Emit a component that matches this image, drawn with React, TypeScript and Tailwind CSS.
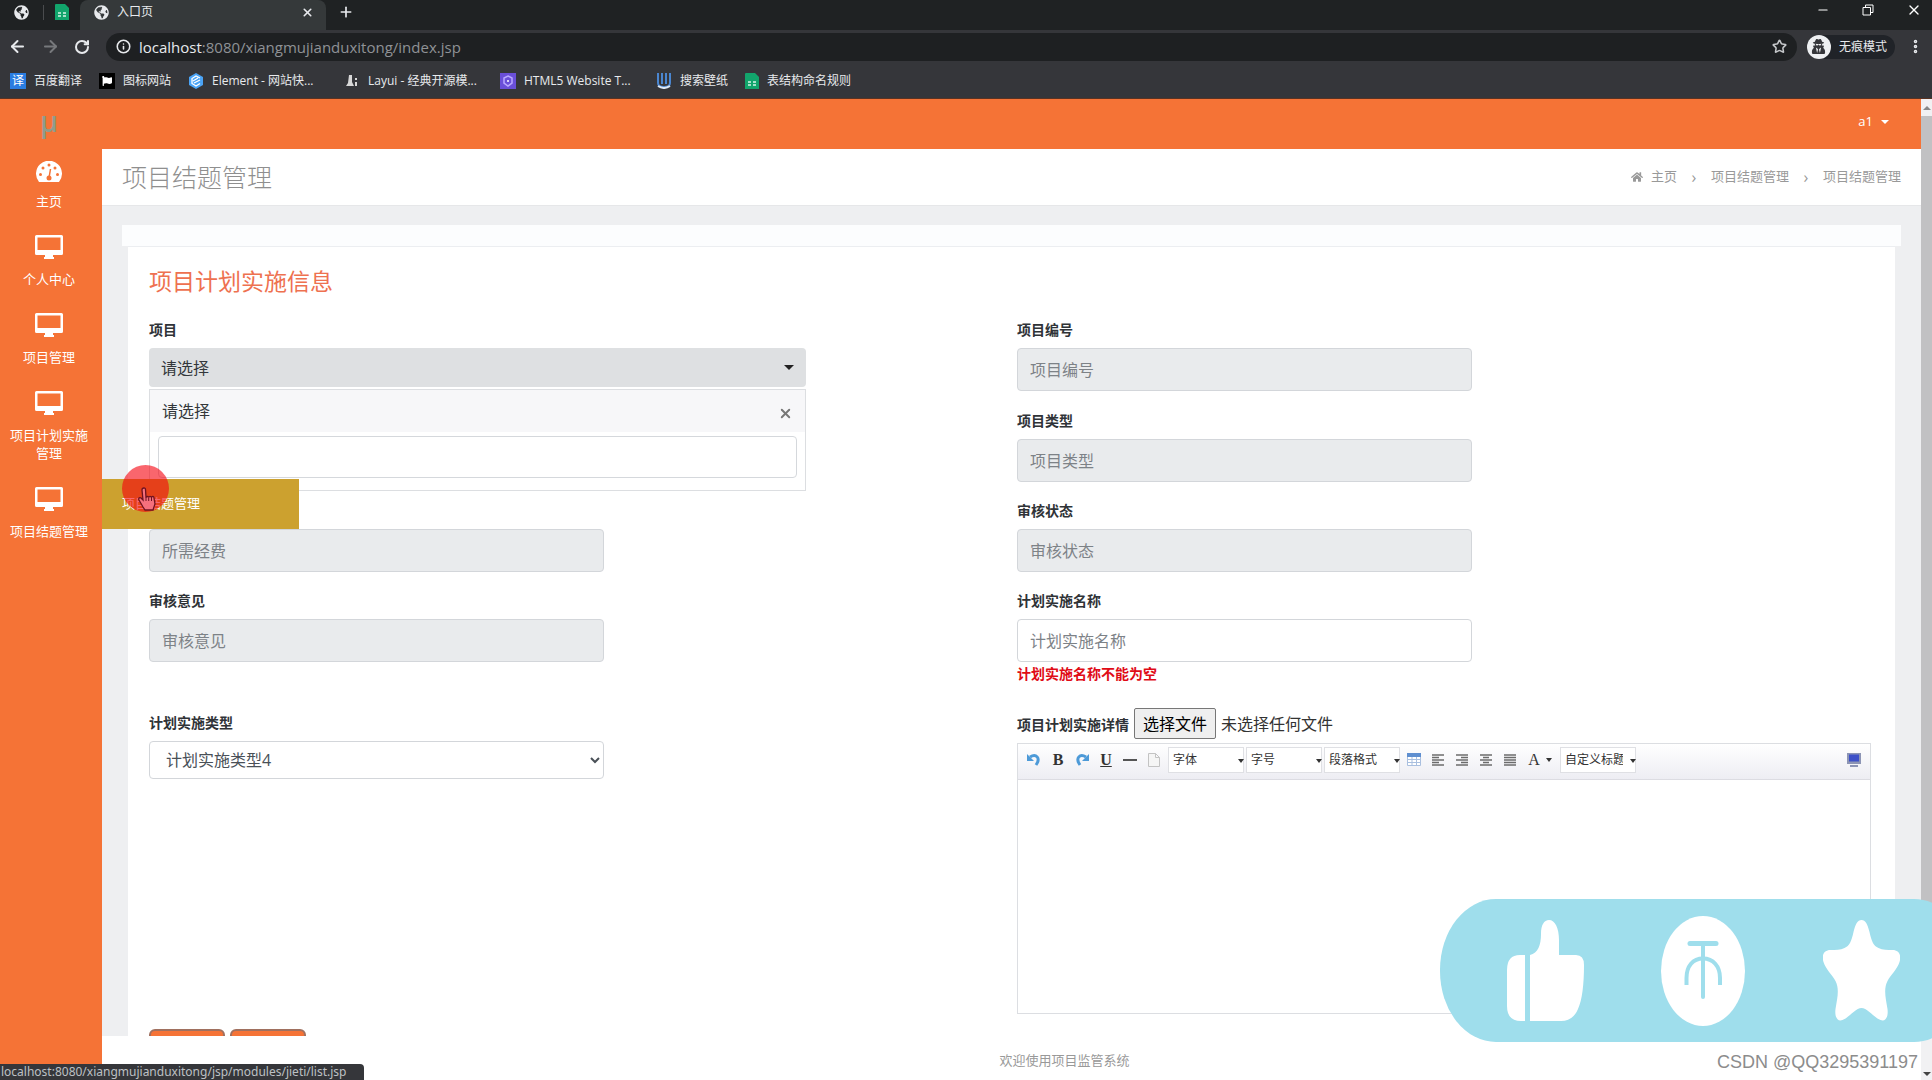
import type { ReactNode } from "react";
import { ArrowLeft, ArrowRight, Info, Minus, MoreVertical, Plus, RotateCw, Star, X } from "lucide-react";
import { FaFlag, FaGlobeAmericas, FaHome, FaUserSecret } from "react-icons/fa";

const SheetIcon = () => (
  <svg viewBox="0 0 14 16" className="h-4 w-3.5 shrink-0">
    <path d="M1 0h9l4 4v12H0V1a1 1 0 0 1 1-1z" fill="#12a56c" />
    <path d="M3 9h3M8 9h3M3 12h3M8 12h3" stroke="#d7f5e8" strokeWidth="1.5" />
  </svg>
);

const bookmarks: { text: string; icon: ReactNode; width: string }[] = [
  {
    text: "百度翻译",
    width: "w-[89px]",
    icon: (
      <span className="flex size-4 items-center justify-center bg-[#2a7de1] text-xs leading-4 text-white">译</span>
    ),
  },
  {
    text: "图标网站",
    width: "w-[89px]",
    icon: (
      <span className="flex size-4 items-center justify-center bg-black text-white">
        <FaFlag size={10} />
      </span>
    ),
  },
  {
    text: "Element - 网站快...",
    width: "w-[156px]",
    icon: (
      <svg viewBox="0 0 16 16" className="size-4 shrink-0">
        <path d="M8 0l7 4v8l-7 4-7-4V4z" fill="#4aa3f5" />
        <path d="M12 5L8 3 4 5.500v5L8 13l4-2.500M5 8l5-3M6 10l6-3" stroke="#fff" strokeWidth="1.300" fill="none" />
      </svg>
    ),
  },
  {
    text: "Layui - 经典开源模...",
    width: "w-[156px]",
    icon: (
      <svg viewBox="0 0 16 16" className="size-4 shrink-0">
        <path d="M5 2h3v7l2 4H2l2-3zM11 5h2v2h-2zM11 9h2v4h-2z" fill="#d8d8d8" />
      </svg>
    ),
  },
  {
    text: "HTML5 Website T...",
    width: "w-[156px]",
    icon: (
      <svg viewBox="0 0 16 16" className="size-4 shrink-0">
        <path d="M0 0h16v16H0z" fill="#6a4fd8" />
        <path d="M8 3l4 2v5l-4 3-4-3V5z" fill="none" stroke="#b9a9ff" strokeWidth="1.500" />
        <circle cx="8" cy="8" r="1" fill="#fff" />
      </svg>
    ),
  },
  {
    text: "搜索壁纸",
    width: "w-[89px]",
    icon: (
      <svg viewBox="0 0 16 16" className="size-4 shrink-0">
        <path d="M2 0v10q0 4 6 4t6-4V0M6 0v11M10 0v11" fill="none" stroke="#4a86d0" strokeWidth="2" />
        <path d="M2 13q6 4 12 0" fill="none" stroke="#dce8f6" strokeWidth="2" />
      </svg>
    ),
  },
  { text: "表结构命名规则", width: "w-[110px]", icon: <SheetIcon /> },
];

function BrowserChrome() {
  return (
    <header className="shrink-0 bg-[#35363a] text-[#e8eaed]">
      <div className="flex h-[30px] bg-[#1f2223]">
        <div className="flex h-6 w-20 shrink-0 items-center">
          <span className="flex w-11 justify-center border-r border-[#4a4c4e]">
            <FaGlobeAmericas size={15} />
          </span>
          <span className="flex flex-1 justify-center">
            <SheetIcon />
          </span>
        </div>
        <div className="flex w-[246px] items-center gap-2 rounded-t-lg bg-[#35393a] pr-3 pb-1.5 pl-3.5 text-xs">
          <FaGlobeAmericas size={15} />
          <span className="flex-1">入口页</span>
          <button aria-label="关闭标签页">
            <X size={13} strokeWidth={3} />
          </button>
        </div>
        <button aria-label="新标签页" className="mb-1.5 ml-3">
          <Plus size={16} strokeWidth={2.5} />
        </button>
        <div className="ml-auto flex h-5 items-center gap-8 pr-2.5 text-white">
          <button aria-label="最小化">
            <Minus size={14} />
          </button>
          <button aria-label="还原">
            <svg viewBox="0 0 12 12" className="size-3" fill="none" stroke="currentColor">
              <path d="M1 3.500h7.500V11H1zM3.500 3.500V1H11v7.500H8.500" />
            </svg>
          </button>
          <button aria-label="关闭">
            <X size={16} />
          </button>
        </div>
      </div>

      <div className="flex h-[33px] items-center pl-2">
        <div className="flex w-[98px] shrink-0 items-center gap-3.5">
          <button aria-label="后退">
            <ArrowLeft size={19} strokeWidth={2.5} />
          </button>
          <button aria-label="前进" className="text-[#77797c]">
            <ArrowRight size={19} strokeWidth={2.5} />
          </button>
          <button aria-label="重新加载">
            <RotateCw size={16} strokeWidth={3} />
          </button>
        </div>
        <div className="flex h-7 flex-1 items-center gap-2 rounded-full bg-[#1e2022] px-2.5">
          <Info size={15} strokeWidth={2.5} />
          <p className="flex-1 text-[15px] leading-5">
            localhost<span className="text-[#8f9296]">:8080/xiangmujianduxitong/index.jsp</span>
          </p>
          <Star size={15} strokeWidth={2.5} className="text-[#c5c7ca]" />
        </div>
        <div className="ml-2.5 flex h-6 items-center gap-2 rounded-full bg-[#202328] pr-2 text-xs">
          <span className="flex size-6 items-center justify-center rounded-full bg-[#eef0f2] text-[#35363a]">
            <FaUserSecret size={15} />
          </span>
          无痕模式
        </div>
        <button aria-label="更多" className="mr-2 ml-3">
          <MoreVertical size={17} strokeWidth={3} />
        </button>
      </div>

      <nav className="flex h-9 items-center border-b border-[#5a3322] pl-2.5 text-xs">
        {bookmarks.map((b) => (
          <a key={b.text} href="#" className={`flex shrink-0 items-center gap-2 whitespace-nowrap ${b.width}`}>
            {b.icon}
            {b.text}
          </a>
        ))}
      </nav>
    </header>
  );
}

const GaugeIcon = () => (
  <svg viewBox="0 0 26 21" className="mt-0.5 h-[21px] w-[26px]">
    <path d="M3 21A13 13 0 1 1 23 21z" fill="#fff" />
    <g fill="#f57336">
      <circle cx="4.500" cy="13.500" r="1.500" />
      <circle cx="7" cy="7" r="1.500" />
      <circle cx="13" cy="4" r="1.500" />
      <circle cx="19" cy="7" r="1.500" />
      <circle cx="21.500" cy="13.500" r="1.500" />
      <circle cx="13" cy="17" r="2.500" />
    </g>
    <path d="M13 17l1.500-9" stroke="#f57336" strokeWidth="1.500" />
  </svg>
);

const DesktopIcon = () => (
  <svg viewBox="0 0 28 24" className="h-6 w-7">
    <path
      d="M1.500 0h25a1.500 1.500 0 0 1 1.500 1.500v17a1.500 1.500 0 0 1-1.500 1.500H18v2h1v2H9v-2h1v-2H1.500A1.500 1.500 0 0 1 0 18.500v-17A1.500 1.500 0 0 1 1.500 0zM2.500 2.500v12.500h23V2.500z"
      fill="#fff"
      fillRule="evenodd"
    />
  </svg>
);

const menu = ["个人中心", "项目管理", "项目计划实施管理", "项目结题管理"];

function Sidebar() {
  return (
    <aside className="flex w-[102px] shrink-0 flex-col items-center bg-[#f57336] pr-1 text-[13px] leading-[18px] text-white">
      <div className="flex h-[60px] items-center pb-4 text-[28px] font-semibold text-[#8f9c8c]">μ</div>
      <nav className="flex w-full flex-col gap-[25px]">
        <a href="#" className="flex flex-col items-center gap-2.5">
          <GaugeIcon />
          主页
        </a>
        {menu.map((item) => (
          <a key={item} href="#" className="flex flex-col items-center gap-[11px] px-2 text-center">
            <DesktopIcon />
            {item}
          </a>
        ))}
      </nav>
    </aside>
  );
}

const inputClass =
  "block h-[43px] w-full max-w-[455px] rounded-sm border border-[#d3d6da] px-3 text-base text-[#495057] placeholder:text-[#7d8287] disabled:bg-[#e9ebed]";

function Field({ id, label, disabled = true }: { id: string; label: string; disabled?: boolean }) {
  return (
    <div>
      <label htmlFor={id} className="mb-2 block font-bold">
        {label}
      </label>
      <input id={id} placeholder={label} disabled={disabled} className={inputClass} />
    </div>
  );
}

function ProjectPicker() {
  return (
    <div className="relative w-full max-w-[657px]">
      <span id="project" className="mb-2 block font-bold">
        项目
      </span>
      <button
        aria-labelledby="project"
        className="flex h-[39px] w-full items-center justify-between rounded-sm bg-[#dee0e2] px-3 text-base text-[#33373b]"
      >
        请选择
        <span className="border-x-5 border-t-5 border-x-transparent border-t-[#222]" />
      </button>
      <div className="absolute top-[69px] left-0 w-full border border-[#dcdee1] bg-white">
        <div className="flex h-[42px] items-center justify-between bg-[#f7f7f9] px-3 text-base text-[#33373b]">
          请选择
          <button aria-label="关闭" className="pt-1 text-[#777]">
            <X size={15} strokeWidth={3} />
          </button>
        </div>
        <div className="px-2 pt-1 pb-3">
          <input aria-label="搜索项目" className="block h-[42px] w-full rounded-sm border border-[#d5d8dc] bg-white px-3" />
        </div>
      </div>
    </div>
  );
}

function ToolButton({ label, children }: { label: string; children: ReactNode }) {
  return (
    <button aria-label={label} className="flex size-6 shrink-0 items-center justify-center font-['Liberation_Serif',serif] text-base text-[#333]">
      {children}
    </button>
  );
}

function ToolSelect({ label }: { label: string }) {
  return (
    <span className="relative shrink-0">
      <select
        aria-label={label}
        className="h-[26px] w-[76px] appearance-none border border-[#dfe0e4] bg-white pr-3 pl-1 text-xs text-[#333]"
      >
        <option>{label}</option>
      </select>
      <span className="pointer-events-none absolute top-3 right-0 border-x-3 border-t-4 border-x-transparent border-t-[#333]" />
    </span>
  );
}

const Lines = ({ d }: { d: string }) => (
  <svg viewBox="0 0 14 12" className="h-3 w-3.5">
    <path d={d} stroke="#6c6c6c" strokeWidth="1.500" />
  </svg>
);

const UndoIcon = ({ flip = false }: { flip?: boolean }) => (
  <svg viewBox="0 0 14 14" className={`size-3.5 ${flip ? "-scale-x-100" : ""}`}>
    <path d="M3 4C9 0 14 5 9 12" fill="none" stroke="#4d9ad8" strokeWidth="3" />
    <path d="M0 1v7h7z" fill="#4d9ad8" />
  </svg>
);

function Editor() {
  return (
    <div className="mt-1 border border-[#dcdee2]">
      <div className="flex h-9 items-center gap-0.5 border-b border-[#dcdce2] bg-linear-to-b from-white to-[#ededf3] px-1 pb-1">
        <div className="flex">
          <ToolButton label="撤销">
            <UndoIcon />
          </ToolButton>
          <ToolButton label="加粗">
            <b>B</b>
          </ToolButton>
          <ToolButton label="重做">
            <UndoIcon flip />
          </ToolButton>
          <ToolButton label="下划线">
            <u className="font-bold">U</u>
          </ToolButton>
          <ToolButton label="分隔线">
            <span className="h-0.5 w-3.5 bg-[#555]" />
          </ToolButton>
          <ToolButton label="新建">
            <svg viewBox="0 0 12 14" className="h-3.5 w-3">
              <path d="M.5.5h7l4 4v9H.5zM7.500.5v4h4" fill="#f5f5f5" stroke="#c3c3c3" />
            </svg>
          </ToolButton>
        </div>
        <ToolSelect label="字体" />
        <ToolSelect label="字号" />
        <ToolSelect label="段落格式" />
        <div className="flex">
          <ToolButton label="表格">
            <svg viewBox="0 0 14 13" className="h-[13px] w-3.5">
              <path d="M.5.5h13v12H.5zM.5 6.500h13M.5 9.500h13M5 3v10M9.500 3v10" fill="#fff" stroke="#a9bfdf" />
              <path d="M0 0h14v4H0z" fill="#5f8fd0" />
            </svg>
          </ToolButton>
          <ToolButton label="左对齐">
            <Lines d="M1 1h12M1 3.500h7M1 6h12M1 8.500h7M1 11h12" />
          </ToolButton>
          <ToolButton label="右对齐">
            <Lines d="M1 1h12M6 3.500h7M1 6h12M6 8.500h7M1 11h12" />
          </ToolButton>
          <ToolButton label="居中">
            <Lines d="M1 1h12M4 3.500h6M1 6h12M4 8.500h6M1 11h12" />
          </ToolButton>
          <ToolButton label="两端对齐">
            <Lines d="M1 1h12M1 3.500h12M1 6h12M1 8.500h12M1 11h12" />
          </ToolButton>
          <button aria-label="字体颜色" className="flex w-9 items-center justify-center gap-1.5 font-['Liberation_Serif',serif] text-base text-[#333]">
            A
            <span className="border-x-3 border-t-4 border-x-transparent border-t-[#333]" />
          </button>
        </div>
        <ToolSelect label="自定义标题" />
        <div className="ml-auto">
          <ToolButton label="全屏">
            <svg viewBox="0 0 14 14" className="size-3.5">
              <path d="M0 0h14v11H0z" fill="#8d95b5" />
              <path d="M2 1.500h10v7H2z" fill="#3d50c8" />
              <path d="M3 12h8v2H3z" fill="#8d95b5" />
            </svg>
          </ToolButton>
        </div>
      </div>
      <textarea aria-label="项目计划实施详情" className="block h-[233px] w-full resize-none bg-white" />
    </div>
  );
}

function PlanForm() {
  return (
    <form className="grid grid-cols-2 gap-x-3.5 text-sm leading-5 text-[#2f3337]">
      <div className="flex flex-col">
        <ProjectPicker />
        <input
          aria-label="所需经费"
          placeholder="所需经费"
          disabled
          className={`mt-[142px] mb-[19px] ${inputClass}`}
        />
        <Field id="opinion" label="审核意见" />
        <label htmlFor="plan-type" className="mt-[51px] mb-2 font-bold">
          计划实施类型
        </label>
        <select
          id="plan-type"
          className="h-[38px] w-full max-w-[455px] rounded-sm border border-[#d3d6da] bg-white px-3 text-base text-[#495057]"
        >
          <option>计划实施类型4</option>
        </select>
      </div>
      <div>
        <Field id="code" label="项目编号" />
        <div className="mt-5 flex flex-col gap-[19px]">
          <Field id="type" label="项目类型" />
          <Field id="status" label="审核状态" />
          <Field id="plan-name" label="计划实施名称" disabled={false} />
        </div>
        <p className="mt-0.5 font-bold text-[#e00b16]">计划实施名称不能为空</p>
        <div className="mt-6 flex items-center gap-[5px]">
          <span className="pt-0.5 font-bold">项目计划实施详情</span>
          <label className="flex h-[31px] items-center rounded-xs border border-[#777] bg-[#efefef] px-2 text-base text-black">
            选择文件
            <input type="file" className="sr-only" />
          </label>
          <span className="text-base text-[#333]">未选择任何文件</span>
        </div>
        <Editor />
      </div>
      <div className="mt-[15px] flex gap-[5px]">
        <button type="button" aria-label="提交" className="h-9 w-[76px] rounded-md border-2 border-[#a0705f] bg-[#f57336]" />
        <button type="button" aria-label="返回" className="h-9 w-[76px] rounded-md border-2 border-[#a0705f] bg-[#f57336]" />
      </div>
    </form>
  );
}

function PageTitle() {
  return (
    <div className="flex h-14 shrink-0 items-center justify-between bg-white px-5 text-[#999]">
      <h1 className="text-[25px] leading-8 font-light text-[#8f8f8f]">项目结题管理</h1>
      <nav className="flex items-center text-[13px]">
        <FaHome size={12} className="mr-2" />
        <a href="#">主页</a>
        <span className="w-[34px] text-center text-base leading-4">›</span>
        <a href="#">项目结题管理</a>
        <span className="w-[34px] text-center text-base leading-4">›</span>
        <span>项目结题管理</span>
      </nav>
    </div>
  );
}

function Flyout() {
  return (
    <div className="absolute top-[380px] left-[102px] w-[197px]">
      <a href="#" className="flex h-[50px] items-center bg-[#cca12f] px-5 text-[13px] text-white">
        项目结题管理
      </a>
      <span className="absolute -top-3.5 left-5 size-[47px] rounded-full bg-[#f5000c]/60" />
      <svg viewBox="0 0 18 24" className="absolute top-2 left-9 h-6 w-[18px]">
        <path
          d="M6 1c-1.500 0-2 1-2 2l1 10-2-2c-1-1-3 0-2 2l4 7 2 3h8l2-6-1-6c0-2-2-2-2.500-.5-.3-1.500-2.500-1.500-2.800 0-.4-1.500-2.400-1.200-2.700 0L7.500 2.500C7.500 1.500 7 1 6 1z"
          fill="#f5707c"
          stroke="#6d1220"
          strokeWidth="1.300"
        />
        <path d="M8 10v4M10.700 11v3M13.500 11v3" stroke="#6d1220" />
      </svg>
    </div>
  );
}

function LikeBanner() {
  return (
    <div className="absolute right-[-38px] bottom-[38px] flex h-[143px] w-[530px] items-center rounded-[56px/71px] bg-[#9fdeec] pl-[67px]">
      <svg viewBox="0 0 77 101" className="h-[101px] w-[77px]" fill="#fff">
        <path d="M18 35v66h-4Q0 101 0 86V50Q0 35 13 35zM23 35C31 33 34 25 34 14 34 5 37 0 42 0c6 0 10 8 10 20v15h17q8 0 8 10c0 20-2 35-6 44q-5 12-17 12H23z" />
      </svg>
      <svg viewBox="0 0 84 110" className="ml-[77px] h-[110px] w-[84px]">
        <ellipse cx="42" cy="55" rx="42" ry="55" fill="#fff" />
        <g fill="none" stroke="#9fdeec" strokeWidth="4" strokeLinecap="round">
          <path d="M29 27.500h26" strokeWidth="5" />
          <path d="M42 28v53" />
          <path d="M25.500 69V62C25.500 50 32 42.500 42 42.500S59 50 59 62v7" strokeLinecap="butt" />
        </g>
      </svg>
      <svg viewBox="0 0 77 101" className="ml-[78px] h-[101px] w-[77px]" fill="#fff">
        <path d="M38.500 0c4 0 6 4 8 12 2 9 4 14 9 16 4 2 9 2 14 2 7 0 9 6 7 12-2 7-9 13-12 19-4 8-2 16 0 28 1 8-2 13-7 11-6-2-13-12-19-12s-13 10-19 12c-5 2-8-3-7-11 2-12 4-20 0-28-3-6-10-12-12-19-2-6 0-12 7-12 5 0 10 0 14-2 5-2 7-7 9-16 2-8 4-12 8-12z" />
      </svg>
    </div>
  );
}

export default function App() {
  return (
    <div className="flex h-screen flex-col overflow-hidden bg-white font-['Open_Sans','Noto_Sans_CJK_SC',sans-serif]">
      <BrowserChrome />
      <div className="relative flex min-h-0 flex-1 overflow-hidden">
        <Sidebar />
        <div className="flex min-w-0 flex-1 flex-col">
          <div className="flex h-[50px] shrink-0 items-center justify-end bg-[#f57336] pr-8 pb-1">
            <button className="flex items-center gap-2 text-[13px] text-white">
              a1
              <span className="border-x-4 border-t-4 border-x-transparent border-t-white" />
            </button>
          </div>
          <PageTitle />
          <main className="min-h-0 flex-1 overflow-hidden border-t border-[#e6e7e9] bg-[#eeeff1] px-5 pt-[19px]">
            <div className="h-[21px] bg-[#fcfdfe]" />
            <section className="mx-1.5 border-t border-[#eceef1] bg-white pt-[19px] pr-6 pl-[21px]">
              <h2 className="mb-6 text-[23px] leading-[30px] text-[#ee7150]">项目计划实施信息</h2>
              <PlanForm />
            </section>
          </main>
          <footer className="flex h-11 shrink-0 items-center justify-center bg-white pt-1.5 pl-[106px] text-[13px] text-[#999]">
            欢迎使用项目监管系统
          </footer>
        </div>
        <div className="flex w-[11px] shrink-0 flex-col items-center bg-[#f1f1f3]">
          <span className="flex h-[17px] items-center">
            <span className="border-x-4 border-b-4 border-x-transparent border-b-[#888]" />
          </span>
          <span className="w-full flex-1 bg-[#c1c1c3]" />
          <span className="flex h-[100px] items-end pb-1">
            <span className="border-x-4 border-t-4 border-x-transparent border-t-[#444]" />
          </span>
        </div>
        <Flyout />
        <LikeBanner />
        <p className="absolute right-3.5 bottom-1.5 font-['Liberation_Sans',sans-serif] text-lg leading-6 text-[#8c8c8c]">
          CSDN @QQ3295391197
        </p>
        <div className="absolute bottom-0 left-0 min-w-[364px] rounded-tr bg-[#35363a] pl-px font-['Noto_Sans',sans-serif] text-xs leading-4 text-[#bdc0c4]">
          localhost:8080/xiangmujianduxitong/jsp/modules/jieti/list.jsp
        </div>
      </div>
    </div>
  );
}
